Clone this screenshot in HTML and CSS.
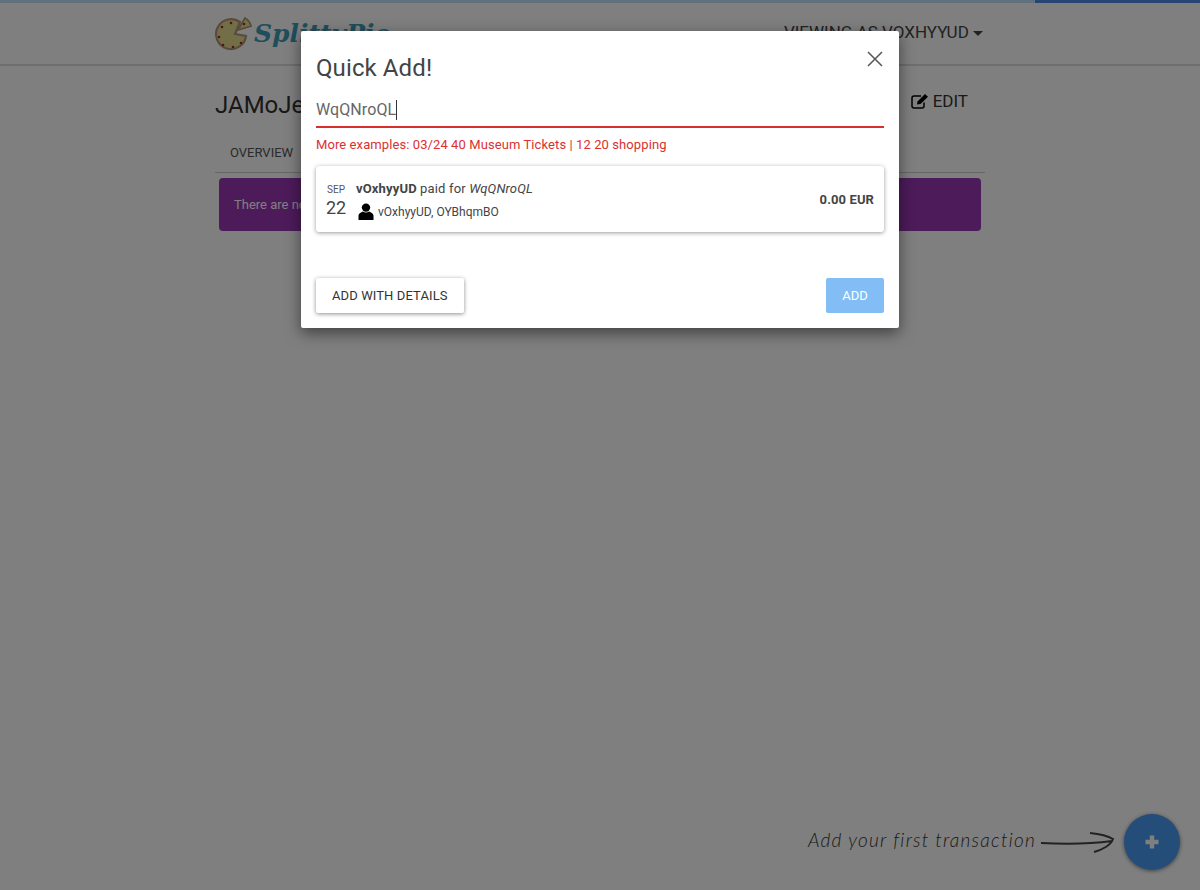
FILE: index.html
```html
<!DOCTYPE html>
<html lang="en">
<head>
  <meta charset="UTF-8" />
  <meta name="viewport" content="width=device-width, initial-scale=1.0"/>
  <title>SplittyPie</title>
  <link rel="stylesheet" href="styles.css">
</head>
<body>
  <div class="progress"><div class="progress-fill"></div></div>

  <header class="navbar">
    <div class="navbar-inner">
      <a class="brand">
        <svg class="brand-pie" width="37" height="36" viewBox="0 0 37 36">
          <path d="M20 18 L25 6 A15 15 0 1 0 31 20 Z" fill="#e4dc8e" stroke="#b09a78" stroke-width="2.2"/>
          <path d="M23 14 L30 2 Q35 5 36 10 Z" fill="#e4dc8e" stroke="#b09a78" stroke-width="1.8"/>
          <g fill="#b8202c">
            <circle cx="16" cy="7" r="1.3"/>
            <circle cx="7" cy="11" r="1.3"/>
            <circle cx="4" cy="21" r="1.3"/>
            <circle cx="8" cy="29" r="1.3"/>
            <circle cx="18" cy="31" r="1.3"/>
            <circle cx="26" cy="27" r="1.3"/>
            <circle cx="29" cy="8" r="1.3"/>
          </g>
        </svg>
        <span class="brand-name">SplittyPie</span>
      </a>
      <a class="viewing">VIEWING AS VOXHYYUD <span class="caret"></span></a>
    </div>
  </header>

  <main class="container">
    <div class="title-row">
      <h2 class="group-name">JAMoJeXb</h2>
      <a class="edit-link">
        <svg width="18" height="16" viewBox="0 0 18 16">
          <path d="M13 9.5 V13 a2 2 0 0 1 -2 2 H3 a2 2 0 0 1 -2 -2 V5 a2 2 0 0 1 2 -2 H10" fill="none" stroke="#000" stroke-width="1.5"/>
          <path d="M6 11.5 L6.5 8.5 L14 1 L17 3.8 L9.5 11 Z" fill="#000"/>
        </svg>
        EDIT
      </a>
    </div>
    <nav class="tabs">
      <a class="tab">OVERVIEW</a>
    </nav>
    <div class="alert">There are no transactions yet</div>
  </main>

  <div class="hint-row">
    <span class="hint-text">Add your first transaction</span>
    <svg class="hint-arrow" width="76" height="26" viewBox="0 0 76 26">
      <path d="M1 13 C20 14 50 14 72 11 M50 3 C60 4 68 6 73 9 C71 15 62 20 54 22" fill="none" stroke="#444" stroke-width="2"/>
    </svg>
    <button class="fab">
      <svg width="16" height="16" viewBox="0 0 16 16"><path d="M8 1.5 V14.5 M1.5 8 H14.5" stroke="#fff" stroke-width="4.4"/></svg>
    </button>
  </div>

  <div class="overlay">
    <div class="modal">
      <div class="modal-head">
        <h3 class="modal-title">Quick Add!</h3>
        <svg class="modal-close" width="16" height="16" viewBox="0 0 16 16">
          <path d="M1 1 L15 15 M15 1 L1 15" stroke="#555" stroke-width="1.5"/>
        </svg>
      </div>

      <div class="quick-input"><span>WqQNroQL</span><span class="cursor"></span></div>
      <p class="quick-help">More examples: 03/24 40 Museum Tickets | 12 20 shopping</p>

      <div class="tx-card">
        <div class="tx-date">
          <span class="tx-month">SEP</span>
          <span class="tx-day">22</span>
        </div>
        <div class="tx-body">
          <div class="tx-title"><strong>vOxhyyUD</strong> paid for <em>WqQNroQL</em></div>
          <div class="tx-people">
            <svg width="16" height="17" viewBox="0 0 16 17">
              <circle cx="8" cy="4.6" r="4.2"/>
              <path d="M0.5 17 V13 C0.5 10.5 3 9.5 5 8.6 Q8 10.4 11 8.6 C13 9.5 15.5 10.5 15.5 13 V17 Z"/>
            </svg>
            <span>vOxhyyUD, OYBhqmBO</span>
          </div>
        </div>
        <div class="tx-amount">0.00 EUR</div>
      </div>

      <div class="modal-actions">
        <button class="btn btn-white">ADD WITH DETAILS</button>
        <button class="btn btn-blue">ADD</button>
      </div>
    </div>
  </div>
</body>
</html>
```

FILE: styles.css
```css
* {
  box-sizing: border-box;
}

body {
  margin: 0;
  height: 890px;
  overflow: hidden;
  position: relative;
  background: #fff;
  font-family: Roboto, sans-serif;
  color: #333;
}

.progress {
  height: 3px;
  background: #bfe0ff;
  display: flex;
  justify-content: flex-end;
}

.progress-fill {
  width: 165px;
  background: #4f8be8;
}

.navbar {
  height: 63px;
  border-bottom: 2px solid #ddd;
}

.navbar-inner {
  width: 770px;
  height: 100%;
  margin: 0 auto;
  padding-right: 2px;
  display: flex;
  justify-content: space-between;
  align-items: center;
}

.brand {
  display: flex;
  align-items: center;
  gap: 2px;
}

.brand-name {
  font-family: "DejaVu Serif", serif;
  font-weight: bold;
  font-style: italic;
  font-size: 25px;
  color: #3f9cb8;
}

.viewing {
  margin-top: -4px;
  font-size: 17px;
  color: #444;
}

.caret {
  display: inline-block;
  vertical-align: middle;
  border-top: 5px solid #444;
  border-left: 5px solid transparent;
  border-right: 5px solid transparent;
}

.container {
  width: 770px;
  margin: 0 auto;
}

.title-row {
  display: flex;
  justify-content: space-between;
  align-items: flex-start;
  padding-top: 24px;
  padding-right: 17px;
}

.group-name {
  margin: 0;
  font-size: 24px;
  font-weight: 400;
  line-height: 30px;
}

.edit-link {
  margin-top: -1px;
  font-size: 17px;
  line-height: 24px;
  display: flex;
  align-items: center;
  gap: 4px;
}

.tabs {
  margin-top: 14px;
  height: 39px;
  border-bottom: 1px solid #ccc;
  padding: 8px 15px;
}

.tab {
  font-size: 13px;
  line-height: 16px;
  color: #555;
}

.alert {
  margin: 5px 4px 0;
  height: 53px;
  padding: 0 15px;
  display: flex;
  align-items: center;
  background: #9a37b4;
  color: #fff;
  border-radius: 4px;
  font-size: 13px;
}

.hint-row {
  position: absolute;
  right: 20px;
  bottom: 20px;
  display: flex;
  align-items: center;
}

.hint-text {
  margin-top: -6px;
  font-family: Lato, sans-serif;
  font-style: italic;
  font-weight: 300;
  font-size: 19px;
  letter-spacing: 1.25px;
  color: #333;
}

.hint-arrow {
  margin: 2px 8px 0 4px;
}

.fab {
  width: 56px;
  height: 56px;
  padding: 0;
  border: none;
  border-radius: 50%;
  background: #4a9af5;
  box-shadow: 0 1px 4px rgba(0,0,0,0.5);
  display: flex;
  align-items: center;
  justify-content: center;
}

.overlay {
  position: absolute;
  top: 0;
  left: 0;
  width: 100%;
  height: 100%;
  background: rgba(0,0,0,0.5);
  padding-top: 31px;
}

.modal {
  width: 598px;
  height: 297px;
  margin: 0 auto;
  padding: 0 15px;
  background: #fff;
  border-radius: 2px;
  box-shadow: 0 5px 15px rgba(0,0,0,0.5);
}

.modal-head {
  display: flex;
  justify-content: space-between;
  height: 58px;
  padding-top: 23px;
}

.modal-title {
  margin: 0;
  font-size: 24px;
  font-weight: 400;
  line-height: 28px;
  letter-spacing: 0.1px;
  color: #444;
}

.modal-close {
  margin-top: -3px;
  margin-right: 1px;
}

.quick-input {
  height: 39px;
  padding-top: 11px;
  font-size: 16px;
  line-height: 20px;
  letter-spacing: 0.1px;
  color: #666;
  border-bottom: 2px solid #d9302c;
  display: flex;
}

.cursor {
  width: 1px;
  height: 20px;
  background: #333;
}

.quick-help {
  margin: 9px 0 0;
  font-size: 13px;
  line-height: 16px;
  letter-spacing: 0.09px;
  color: #dc3030;
}

.tx-card {
  margin-top: 13px;
  height: 66px;
  display: flex;
  align-items: center;
  padding-right: 10px;
  border-radius: 3px;
  box-shadow: 0 1px 4px rgba(0,0,0,0.4);
}

.tx-date {
  width: 40px;
  display: flex;
  flex-direction: column;
  align-items: center;
}

.tx-month {
  margin-top: 3px;
  font-size: 10px;
  line-height: 13px;
  color: #555;
}

.tx-day {
  margin-top: 1px;
  font-size: 18px;
  line-height: 22px;
  color: #444;
}

.tx-body {
  flex: 1;
  padding-top: 3px;
}

.tx-title {
  font-size: 13px;
  line-height: 16px;
  letter-spacing: 0.15px;
  color: #444;
}

.tx-people {
  margin-top: 6px;
  padding-left: 2px;
  font-size: 12px;
  line-height: 16px;
  color: #444;
  display: flex;
  align-items: center;
  gap: 4px;
}

.tx-amount {
  font-size: 13px;
  font-weight: 700;
  letter-spacing: 0.1px;
  color: #444;
}

.modal-actions {
  margin-top: 46px;
  display: flex;
  justify-content: space-between;
}

.btn {
  height: 35px;
  padding: 0 16px;
  border: none;
  border-radius: 2px;
  font-family: Roboto, sans-serif;
  font-size: 13px;
  letter-spacing: 0.1px;
}

.btn-white {
  background: #fff;
  color: #333;
  box-shadow: 0 1px 4px rgba(0,0,0,0.45);
}

.btn-blue {
  background: #82bdf5;
  color: #fff;
}
```
